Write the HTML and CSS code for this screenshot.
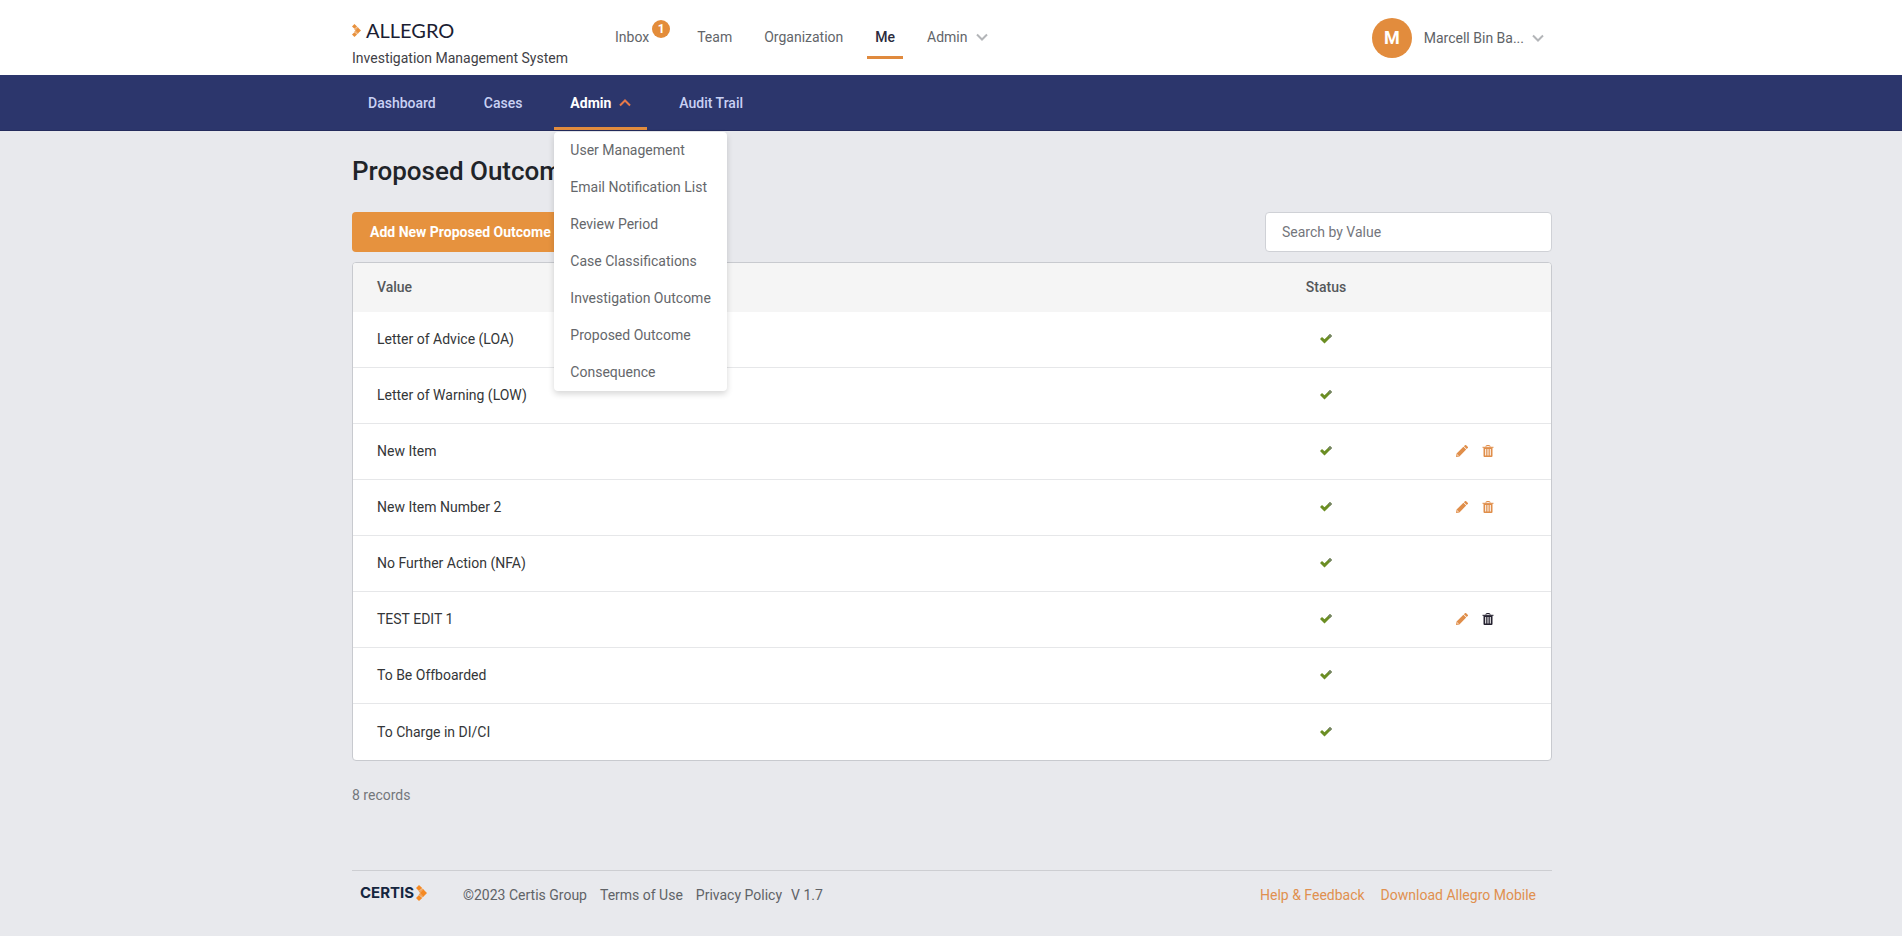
FILE: index.html
```html
<!DOCTYPE html>
<html lang="en">
<head>
<meta charset="utf-8">
<title>Allegro - Proposed Outcome</title>
<link rel="stylesheet" href="styles.css">
</head>
<body>
<svg class="defs" aria-hidden="true">
  <symbol id="chevron" viewBox="0 0 12 8"><path d="M1 1.500l5 5 5-5" fill="none" stroke="currentColor" stroke-width="2"/></symbol>
  <symbol id="check" viewBox="0 0 12 10"><path d="M0 5l2-2 2.500 2.300L10 0l2 2-7.500 7.600z" fill="#6b8e23"/><path d="M8.200 1.800L10 0l2 2-2 2z" fill="#75816a"/></symbol>
  <symbol id="pencil" viewBox="0 0 12 12"><path d="M8.900.3a.9.9 0 0 1 1.300 0l1.500 1.500a.9.9 0 0 1 0 1.300l-1 1-2.800-2.800zM7.400 1.800L10.200 4.600 3.400 11.400 0 12l.6-3.400zM1.300 9.300L1.100 10l.9.900.7-.2z" fill="currentColor" fill-rule="evenodd"/></symbol>
  <symbol id="trash" viewBox="0 0 12 12"><path d="M4 1.800V1.200Q4 .5 4.700.5h2.600Q8 .5 8 1.200v.6M.5 2.300h11" fill="none" stroke="currentColor"/><path d="M1.500 2.500h9V11q0 1-1 1h-7q-1 0-1-1zM3.200 4v6.500h1V4zm2.300 0v6.500h1V4zm2.300 0v6.500h1V4z" fill="currentColor" fill-rule="evenodd"/></symbol>
  <symbol id="mark" viewBox="0 0 11 16"><path d="M3 0l3.200 3L3 6 0 3zM7.500 4.600L11 8l-3.500 3.400L4.200 8zM3 10l3.200 3L3 16l-3-3z" fill="currentColor"/><path d="M6.500 3.400L8 4.800 4.400 8.200 2.600 6.600zM4.400 7.800L8 11.200l-1.500 1.400-3.900-3.200z" fill="currentColor" opacity=".75"/></symbol>
</svg>
<header class="top">
  <div class="wrap top-row">
    <a class="brand" href="#"><span class="brand-name"><svg class="brand-mark"><use href="#mark"/></svg>ALLEGRO</span><span>Investigation Management System</span></a>
    <nav class="top-nav" aria-label="Primary">
      <a class="inbox" href="#">Inbox<span class="badge">1</span></a>
      <a href="#">Team</a>
      <a href="#">Organization</a>
      <a class="current" href="#">Me</a>
      <a href="#">Admin <svg class="chevron"><use href="#chevron"/></svg></a>
    </nav>
    <button class="user" type="button"><span class="avatar">M</span><span>Marcell Bin Ba...</span><svg class="chevron"><use href="#chevron"/></svg></button>
  </div>
</header>
<nav class="bar" aria-label="Section">
  <ul class="wrap bar-row">
    <li><a href="#">Dashboard</a></li>
    <li><a href="#">Cases</a></li>
    <li class="open"><a href="#">Admin <svg class="chevron up"><use href="#chevron"/></svg></a>
      <ul class="menu">
        <li><a href="#">User Management</a></li>
        <li><a href="#">Email Notification List</a></li>
        <li><a href="#">Review Period</a></li>
        <li><a href="#">Case Classifications</a></li>
        <li><a href="#">Investigation Outcome</a></li>
        <li><a href="#">Proposed Outcome</a></li>
        <li><a href="#">Consequence</a></li>
      </ul>
    </li>
    <li><a href="#">Audit Trail</a></li>
  </ul>
</nav>
<main class="wrap">
  <h1>Proposed Outcome</h1>
  <div class="tools">
    <button class="add" type="button">Add New Proposed Outcome</button>
    <input class="search" type="text" placeholder="Search by Value" aria-label="Search by Value">
  </div>
  <div class="card">
    <table>
      <thead><tr><th>Value</th><th class="status">Status</th><th class="actions"></th></tr></thead>
      <tbody>
        <tr><td>Letter of Advice (LOA)</td><td class="status"><svg class="check"><use href="#check"/></svg></td><td></td></tr>
        <tr><td>Letter of Warning (LOW)</td><td class="status"><svg class="check"><use href="#check"/></svg></td><td></td></tr>
        <tr><td>New Item</td><td class="status"><svg class="check"><use href="#check"/></svg></td><td class="actions"><div><button type="button" aria-label="Edit"><svg><use href="#pencil"/></svg></button><button type="button" aria-label="Delete"><svg><use href="#trash"/></svg></button></div></td></tr>
        <tr><td>New Item Number 2</td><td class="status"><svg class="check"><use href="#check"/></svg></td><td class="actions"><div><button type="button" aria-label="Edit"><svg><use href="#pencil"/></svg></button><button type="button" aria-label="Delete"><svg><use href="#trash"/></svg></button></div></td></tr>
        <tr><td>No Further Action (NFA)</td><td class="status"><svg class="check"><use href="#check"/></svg></td><td></td></tr>
        <tr><td>TEST EDIT 1</td><td class="status"><svg class="check"><use href="#check"/></svg></td><td class="actions"><div><button type="button" aria-label="Edit"><svg><use href="#pencil"/></svg></button><button class="dark" type="button" aria-label="Delete"><svg><use href="#trash"/></svg></button></div></td></tr>
        <tr><td>To Be Offboarded</td><td class="status"><svg class="check"><use href="#check"/></svg></td><td></td></tr>
        <tr><td>To Charge in DI/CI</td><td class="status"><svg class="check"><use href="#check"/></svg></td><td></td></tr>
      </tbody>
    </table>
  </div>
  <p class="records">8 records</p>
</main>
<footer class="wrap">
  <div class="foot">
    <a class="certis" href="#">CERTIS<svg class="certis-mark"><use href="#mark"/></svg></a>
    <div class="legal"><span>©2023 Certis Group</span><a href="#">Terms of Use</a><a href="#">Privacy Policy</a><span class="version">V 1.7</span></div>
    <div class="help"><a href="#">Help &amp; Feedback</a><a href="#">Download Allegro Mobile</a></div>
  </div>
</footer>
</body>
</html>
```
FILE: styles.css
```css
* { box-sizing: border-box; }
body { margin: 0; background: #e8e9ed; color: #343638; font: 14px/20px Roboto, "Liberation Sans", sans-serif; }
a { color: inherit; text-decoration: none; }
ul { list-style: none; margin: 0; padding: 0; }
button, input { font: inherit; }
.defs { position: absolute; width: 0; height: 0; }
.wrap { width: 100%; max-width: 1202px; margin: 0 auto; padding-left: 2px; }

.top { background: #fff; }
.top-row { display: flex; height: 75px; }
.brand { display: flex; flex-direction: column; gap: 6px; width: 247px; padding-top: 18px; color: #3f4146; }
.brand-name { display: flex; align-items: center; gap: 5px; height: 24px; font: 20px/24px Lato, sans-serif; color: #1b1e33; }
.brand-mark { width: 9px; height: 15px; color: #e8903c; }
.top-nav { display: flex; align-items: flex-start; padding-top: 16px; gap: 16px; color: #626569; }
.top-nav a { display: flex; align-items: center; gap: 8px; height: 43px; padding: 2px 8px 0; border-bottom: 3px solid transparent; }
.top-nav .current { border-color: #e08a3e; color: #2b2b3d; font-weight: 500; }
.top-nav .inbox { gap: 3px; padding-left: 16px; padding-right: 3px; }
.badge { width: 18px; height: 18px; margin-bottom: 16px; border-radius: 50%; background: #e38c3a; color: #fff; font-size: 12px; font-weight: 700; line-height: 18px; text-align: center; }
.chevron { width: 12px; height: 8px; color: #b3b5b8; }
.chevron.up { color: #e8794a; transform: rotate(180deg); }
.user { display: flex; align-items: center; gap: 12px; height: 75px; margin-left: auto; padding: 0 8px 0 0; border: 0; background: none; color: #606367; }
.user .chevron { margin-left: -4px; }
.avatar { width: 40px; height: 40px; border-radius: 50%; background: #e28c3d; color: #fff; font-size: 18px; font-weight: 700; line-height: 40px; text-align: center; }

.bar { background: #2c366c; border-bottom: 1px solid #242b5c; }
.bar-row { display: flex; gap: 16px; color: #c9d1f4; font-weight: 500; }
.bar-row > li { position: relative; }
.bar-row > li > a { display: flex; align-items: center; gap: 8px; height: 55px; padding: 3px 16px 0; border-bottom: 3px solid transparent; }
.bar-row > .open > a { border-color: #e28c3d; color: #fff; font-weight: 700; }
.menu { position: absolute; z-index: 2; top: 100%; left: 0; margin-top: 2px; border-radius: 4px; background: #fff; box-shadow: 0 3px 6px rgba(0, 0, 0, .16); color: #65676b; font-weight: 400; white-space: nowrap; }
.menu a { display: block; padding: 8px 16px 9px; }

h1 { margin: 0; padding: 24px 0 25px; font-size: 26px; line-height: 32px; font-weight: 500; color: #1f2429; }
.tools { display: flex; justify-content: space-between; margin-bottom: 10px; }
.add { height: 40px; padding: 0 18px; border: 0; border-radius: 4px; background: #e6923e; color: #fff; font-weight: 700; }
.search { width: 287px; height: 40px; padding: 0 16px; border: 1px solid #cfd1d6; border-radius: 4px; background: #fff; }
.search::placeholder { color: #74767c; opacity: 1; }
.card { overflow: hidden; border: 1px solid #c8cacf; border-radius: 4px; background: #fff; }
table { width: 100%; table-layout: fixed; border-collapse: separate; border-spacing: 0; }
th { height: 49px; padding: 0 24px 2px; background: #f5f5f5; color: #55585b; font-weight: 500; text-align: left; }
td { height: 56px; padding: 0 24px 1px; border-bottom: 1px solid #e6e7e9; }
tbody tr:last-child td { border-bottom: 0; }
th.status { width: 146px; }
th.actions { width: 152px; }
th.status, td.status { text-align: center; }
td svg { display: block; width: 12px; height: 12px; }
td .check { height: 10px; margin: 0 auto; }
.actions div { display: flex; justify-content: center; gap: 14px; }
.actions button { padding: 0; border: 0; background: none; color: #e08e4a; }
.actions .dark { color: #24212f; }
.records { margin: 24px 0 65px; color: #74777b; }

.foot { display: flex; align-items: center; height: 67px; padding: 0 16px 18px 8px; border-top: 1px solid #cdced2; color: #606367; }
.certis { display: flex; align-items: center; gap: 2px; width: 103px; padding-bottom: 4px; color: #15263f; font: 700 15px/20px Inter, sans-serif; }
.certis-mark { width: 11px; height: 16px; color: #f58a24; }
.legal { display: flex; gap: 13px; }
.version { margin-left: -4px; }
.help { display: flex; gap: 16px; margin-left: auto; color: #e0904f; }
```
